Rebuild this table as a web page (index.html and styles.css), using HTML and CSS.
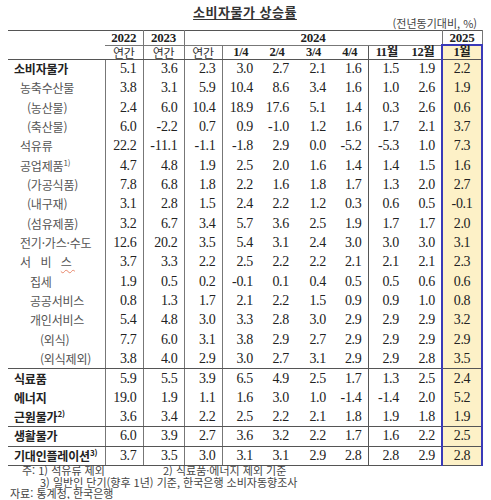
FILE: index.html
```html
<!DOCTYPE html>
<html lang="ko">
<head>
    <meta charset="UTF-8">
    <title>소비자물가 상승률</title>
    <link rel="stylesheet" href="styles.css">
</head>
<body>
    <div class="page">
        <h1 class="title">소비자물가 상승률</h1>
        <div class="unit">(전년동기대비, %)</div>

        <table class="cpi">
            <colgroup>
                <col class="c-label">
                <col class="c-38"><col class="c-41"><col class="c-38">
                <col class="c-37"><col class="c-36"><col class="c-37"><col class="c-36">
                <col class="c-37"><col class="c-37"><col class="c-40">
            </colgroup>
            <thead>
                <tr class="h-year">
                    <th rowspan="2" class="label"></th>
                    <th class="yr">2022</th>
                    <th class="yr">2023</th>
                    <th class="yr" colspan="7">2024</th>
                    <th class="yr last">2025</th>
                </tr>
                <tr class="h-sub">
                    <th class="yr kr">연간</th>
                    <th class="yr kr">연간</th>
                    <th class="yr kr">연간</th>
                    <th>1/4</th>
                    <th>2/4</th>
                    <th>3/4</th>
                    <th class="sep">4/4</th>
                    <th>11월</th>
                    <th>12월</th>
                    <th class="hl top">1월</th>
                </tr>
            </thead>
            <tbody>
                <tr><td class="label b l0">소비자물가</td><td>5.1</td><td>3.6</td><td>2.3</td><td>3.0</td><td>2.7</td><td>2.1</td><td class="sep">1.6</td><td>1.5</td><td>1.9</td><td class="hl">2.2</td></tr>
                <tr><td class="label l1">농축수산물</td><td>3.8</td><td>3.1</td><td>5.9</td><td>10.4</td><td>8.6</td><td>3.4</td><td class="sep">1.6</td><td>1.0</td><td>2.6</td><td class="hl">1.9</td></tr>
                <tr><td class="label l2">(농산물)</td><td>2.4</td><td>6.0</td><td>10.4</td><td>18.9</td><td>17.6</td><td>5.1</td><td class="sep">1.4</td><td>0.3</td><td>2.6</td><td class="hl">0.6</td></tr>
                <tr><td class="label l2">(축산물)</td><td>6.0</td><td>-2.2</td><td>0.7</td><td>0.9</td><td>-1.0</td><td>1.2</td><td class="sep">1.6</td><td>1.7</td><td>2.1</td><td class="hl">3.7</td></tr>
                <tr><td class="label l1">석유류</td><td>22.2</td><td>-11.1</td><td>-1.1</td><td>-1.8</td><td>2.9</td><td>0.0</td><td class="sep">-5.2</td><td>-5.3</td><td>1.0</td><td class="hl">7.3</td></tr>
                <tr><td class="label l1">공업제품<sup>1)</sup></td><td>4.7</td><td>4.8</td><td>1.9</td><td>2.5</td><td>2.0</td><td>1.6</td><td class="sep">1.4</td><td>1.4</td><td>1.5</td><td class="hl">1.6</td></tr>
                <tr><td class="label l2">(가공식품)</td><td>7.8</td><td>6.8</td><td>1.8</td><td>2.2</td><td>1.6</td><td>1.8</td><td class="sep">1.7</td><td>1.3</td><td>2.0</td><td class="hl">2.7</td></tr>
                <tr><td class="label l2">(내구재)</td><td>3.1</td><td>2.8</td><td>1.5</td><td>2.4</td><td>2.2</td><td>1.2</td><td class="sep">0.3</td><td>0.6</td><td>0.5</td><td class="hl">-0.1</td></tr>
                <tr><td class="label l2">(섬유제품)</td><td>3.2</td><td>6.7</td><td>3.4</td><td>5.7</td><td>3.6</td><td>2.5</td><td class="sep">1.9</td><td>1.7</td><td>1.7</td><td class="hl">2.0</td></tr>
                <tr><td class="label l1">전기·가스·수도</td><td>12.6</td><td>20.2</td><td>3.5</td><td>5.4</td><td>3.1</td><td>2.4</td><td class="sep">3.0</td><td>3.0</td><td>3.0</td><td class="hl">3.1</td></tr>
                <tr><td class="label l1 wide">서 비 <span class="squiggle">스</span></td><td>3.7</td><td>3.3</td><td>2.2</td><td>2.5</td><td>2.2</td><td>2.2</td><td class="sep">2.1</td><td>2.1</td><td>2.1</td><td class="hl">2.3</td></tr>
                <tr><td class="label l3">집세</td><td>1.9</td><td>0.5</td><td>0.2</td><td>-0.1</td><td>0.1</td><td>0.4</td><td class="sep">0.5</td><td>0.5</td><td>0.6</td><td class="hl">0.6</td></tr>
                <tr><td class="label l3">공공서비스</td><td>0.8</td><td>1.3</td><td>1.7</td><td>2.1</td><td>2.2</td><td>1.5</td><td class="sep">0.9</td><td>0.9</td><td>1.0</td><td class="hl">0.8</td></tr>
                <tr><td class="label l3">개인서비스</td><td>5.4</td><td>4.8</td><td>3.0</td><td>3.3</td><td>2.8</td><td>3.0</td><td class="sep">2.9</td><td>2.9</td><td>2.9</td><td class="hl">3.2</td></tr>
                <tr><td class="label l4">(외식)</td><td>7.7</td><td>6.0</td><td>3.1</td><td>3.8</td><td>2.9</td><td>2.7</td><td class="sep">2.9</td><td>2.9</td><td>2.9</td><td class="hl">2.9</td></tr>
                <tr class="end"><td class="label l4">(외식제외)</td><td>3.8</td><td>4.0</td><td>2.9</td><td>3.0</td><td>2.7</td><td>3.1</td><td class="sep">2.9</td><td>2.9</td><td>2.8</td><td class="hl">3.5</td></tr>
                <tr><td class="label b l0">식료품</td><td>5.9</td><td>5.5</td><td>3.9</td><td>6.5</td><td>4.9</td><td>2.5</td><td class="sep">1.7</td><td>1.3</td><td>2.5</td><td class="hl">2.4</td></tr>
                <tr><td class="label b l0">에너지</td><td>19.0</td><td>1.9</td><td>1.1</td><td>1.6</td><td>3.0</td><td>1.0</td><td class="sep">-1.4</td><td>-1.4</td><td>2.0</td><td class="hl">5.2</td></tr>
                <tr class="end"><td class="label b l0">근원물가<sup>2)</sup></td><td>3.6</td><td>3.4</td><td>2.2</td><td>2.5</td><td>2.2</td><td>2.1</td><td class="sep">1.8</td><td>1.9</td><td>1.8</td><td class="hl">1.9</td></tr>
                <tr class="end"><td class="label b l0">생활물가</td><td>6.0</td><td>3.9</td><td>2.7</td><td>3.6</td><td>3.2</td><td>2.2</td><td class="sep">1.7</td><td>1.6</td><td>2.2</td><td class="hl">2.5</td></tr>
                <tr class="end"><td class="label b l0">기대인플레이션<sup>3)</sup></td><td>3.7</td><td>3.5</td><td>3.0</td><td>3.1</td><td>3.1</td><td>2.9</td><td class="sep">2.8</td><td>2.8</td><td>2.9</td><td class="hl bottom">2.8</td></tr>
            </tbody>
        </table>

        <div class="notes">
            <div class="n1"><span class="n-first">주: 1) 석유류 제외</span>2) 식료품·에너지 제외 기준</div>
            <div class="n2">3) 일반인 단기(향후 1년) 기준, 한국은행 소비자동향조사</div>
            <div class="n3">자료: 통계청, 한국은행</div>
        </div>
    </div>
</body>
</html>
```

FILE: styles.css
```css
/* Page */
body {
    margin: 0;
    background: #fff;
    color: #222;
    font-family: "Liberation Serif", serif;
}

.page {
    width: 474px;
    padding: 0 8px;
}

/* Title block */
.title {
    margin: 0;
    padding-top: 4px;
    text-align: center;
    font-family: "Noto Sans CJK KR", sans-serif;
    font-size: 13px;
    font-weight: bold;
    line-height: 16px;
    letter-spacing: 0.5px;
    color: #333;
    text-decoration: underline;
    text-underline-offset: 2px;
}

.unit {
    margin-top: -3px;
    padding-right: 5px;
    text-align: right;
    font-family: "Noto Sans CJK KR", sans-serif;
    font-size: 11px;
    line-height: 13px;
    color: #444;
}

/* spell-check style wavy mark seen in the source document */
.squiggle {
    text-decoration: underline wavy #e8866a;
    text-decoration-thickness: 1px;
    text-underline-offset: 2px;
}

/* Table */
.cpi {
    width: 474px;
    table-layout: fixed;
    border-collapse: collapse;
    border-top: 1px solid #555;
    border-bottom: 1px solid #555;
    font-size: 14px;
    letter-spacing: -0.3px;
}

.c-label { width: 97px; }
.c-36 { width: 36px; }
.c-37 { width: 37px; }
.c-38 { width: 38px; }
.c-40 { width: 40px; }
.c-41 { width: 41px; }

.cpi th,
.cpi td {
    padding: 0;
    white-space: nowrap;
}

.h-year { height: 13px; }
.h-sub { height: 14px; }

.cpi th {
    font-family: "Liberation Serif", "Noto Sans CJK KR", serif;
    font-size: 13px;
    line-height: 13px;
    font-weight: bold;
    text-align: center;
}

.h-year th {
    border-bottom: 1px solid #777;
}

.h-sub th {
    border-bottom: 1px solid #555;
    font-size: 12.5px;
    letter-spacing: -0.4px;
}

.cpi th.label {
    border-bottom: 1px solid #555;
}

.cpi th.kr {
    font-family: "Noto Sans CJK KR", sans-serif;
    font-size: 12px;
    font-weight: normal;
    color: #333;
}

.cpi th.last {
    border-left: 1px solid #777;
    border-bottom: none;
}

.cpi th.yr {
    border-right: 1px solid #777;
}

.cpi tbody tr {
    height: 19.33px;
}

.cpi td {
    text-align: right;
    padding-right: 6px;
    line-height: 16px;
}

/* vertical rules of the body */
.cpi td:nth-child(1),
.cpi td:nth-child(2),
.cpi td:nth-child(3),
.cpi td:nth-child(4) {
    border-right: 1px solid #777;
}

.cpi .sep {
    border-right: 1px solid #555;
}

.cpi tr.end td {
    border-bottom: 1px solid #555;
}

/* highlighted 1월 column */
.cpi .hl {
    background: #fdf1c7;
    border-left: 2px solid #3a3ab8;
    border-right: 2px solid #3a3ab8;
    text-align: center;
    padding-right: 0;
}

.cpi .top {
    border-top: 2px solid #3a3ab8;
}

.cpi td.bottom {
    border-bottom: 2px solid #3a3ab8;
}

/* row labels */
.cpi td.label {
    text-align: left;
    padding-right: 0;
    font-family: "Noto Sans CJK KR", sans-serif;
    font-size: 12px;
    letter-spacing: -0.2px;
    color: #555;
}

.cpi td.b {
    font-weight: bold;
    color: #222;
}

.cpi td.wide { letter-spacing: 3px; }

.cpi td.l0 { padding-left: 6px; }
.cpi td.l1 { padding-left: 12px; }
.cpi td.l2 { padding-left: 19px; }
.cpi td.l3 { padding-left: 22px; }
.cpi td.l4 { padding-left: 32px; }

.label sup {
    font-size: 8px;
    line-height: 0;
    vertical-align: 5px;
    letter-spacing: 0;
}

/* Footnotes */
.notes {
    margin-top: -2px;
    font-family: "Noto Sans CJK KR", sans-serif;
    font-size: 11px;
    line-height: 12px;
    color: #444;
}

.n1 { padding-left: 14px; }
.n-first {
    display: inline-block;
    width: 141px;
}
.n2 { padding-left: 32px; }
.n3 {
    padding-left: 2px;
    margin-top: -1px;
}
```
